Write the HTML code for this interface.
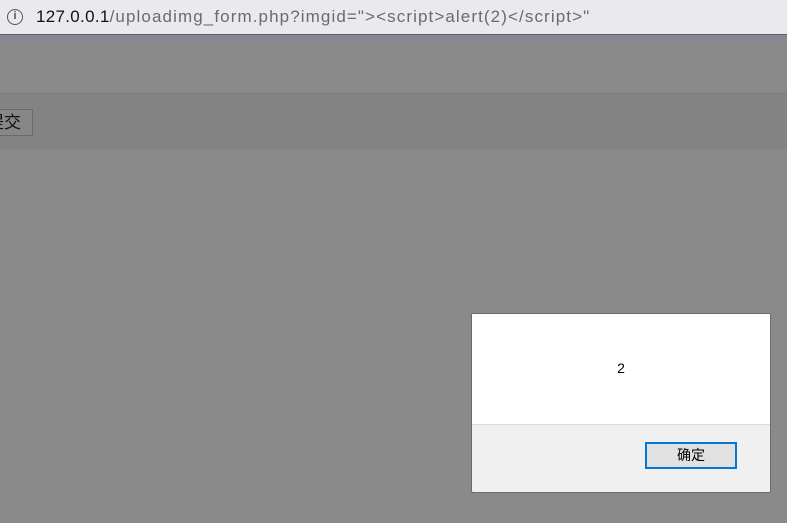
<!DOCTYPE html>
<html><head><meta charset="utf-8"><style>
*{margin:0;padding:0;box-sizing:border-box}
body{width:787px;height:523px;overflow:hidden;background:#8a8a8a;font-family:"Liberation Sans","Noto Sans CJK SC",sans-serif;position:relative}
.bar{position:absolute;left:0;top:0;width:787px;height:35px;background:#eaeaee;border-bottom:1px solid #5e6070}
.strip{position:absolute;left:0;top:35px;width:787px;height:7px;background:#878893}
.url{position:absolute;left:36px;top:7px;font-size:17px;letter-spacing:1.1px;color:#6b6b6b;white-space:nowrap}
.url b{font-weight:normal;color:#111;letter-spacing:0.3px}
.info{position:absolute;left:7px;top:9px;width:16px;height:16px;border:1.5px solid #555;border-radius:50%;font-size:11px;text-align:center;line-height:13px;color:#555;font-weight:bold}
.band{position:absolute;left:0;top:93px;width:787px;height:56px;background:#838383;border-top:1px solid #7c7c7c}
.btn{position:absolute;left:-14px;top:109px;width:47px;height:27px;border:1px solid #6a6a6a;background:#878787;font-size:17px;line-height:25px;text-align:right;padding-right:11px;color:#111;white-space:nowrap;overflow:hidden}
.dlg{position:absolute;left:471px;top:313px;width:300px;height:180px;border:1px solid #6c6c6c;background:#f0f0f0;border-radius:2px}
.top{height:111px;background:#fff;border-bottom:1px solid #dcdcdc;text-align:center;font-size:14px;padding-top:46px;color:#000}
.ok{position:absolute;left:173px;top:128px;width:92px;height:27px;border:2px solid #0078d7;background:#e1e1e1;font-size:14px;text-align:center;line-height:23px}
</style></head><body>
<div class="bar"><div class="info">i</div><div class="url"><b>127.0.0.1</b>/uploadimg_form.php?imgid="&gt;&lt;script&gt;alert(2)&lt;/script&gt;"</div></div>
<div class="strip"></div>
<div class="band"></div>
<div class="btn">提交</div>
<div class="dlg"><div class="top">2</div><div class="ok">确定</div></div>
</body></html>
